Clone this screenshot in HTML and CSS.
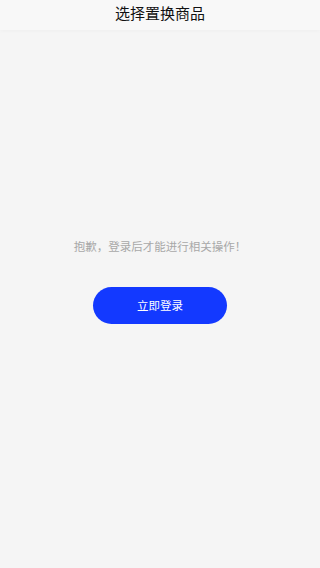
FILE: index.html
```html
<!DOCTYPE html>
<html lang="zh">
<head>
<meta charset="utf-8">
<meta name="viewport" content="width=device-width, initial-scale=1">
<link rel="stylesheet" href="styles.css">
</head>
<body>
<div class="page">
  <header class="nav"><h1 class="nav-title">选择置换商品</h1></header>
  <main class="empty">
    <p class="empty-text">抱歉，登录后才能进行相关操作！</p>
    <button class="login-btn" type="button">立即登录</button>
  </main>
</div>
</body>
</html>
```
FILE: styles.css
```css
html, body {
  margin: 0;
  padding: 0;
  background: #f5f5f5;
  font-family: "Noto Sans CJK SC", "Noto Sans", sans-serif;
}
.page {
  width: 320px;
  height: 568px;
  display: flex;
  flex-direction: column;
}
.nav {
  height: 30px;
  background: #f8f8f8;
  box-shadow: 0 2px 3px rgba(0,0,0,0.02);
  display: flex;
  align-items: center;
  justify-content: center;
}
.nav-title {
  margin: 0;
  font-size: 15px;
  font-weight: 400;
  color: #111;
  line-height: 30px;
  position: relative;
  top: -2px;
}
.empty {
  display: flex;
  flex-direction: column;
  align-items: center;
  padding-top: 207px;
}
.empty-text {
  margin: 0;
  font-size: 11.5px;
  line-height: 18px;
  color: #a8a8a8;
}
.login-btn {
  margin-top: 32px;
  width: 134px;
  height: 37px;
  border: none;
  border-radius: 19px;
  background: #1339ff;
  color: #fff;
  font-family: inherit;
  font-size: 11.5px;
  line-height: 35px;
  padding: 0;
}
```
